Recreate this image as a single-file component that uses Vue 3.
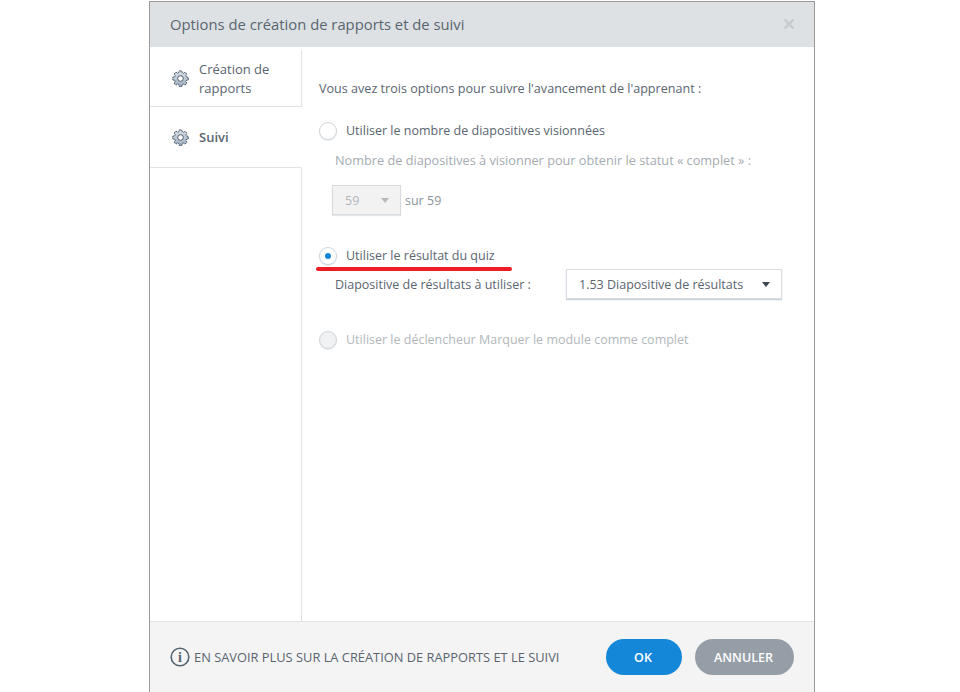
<template>
  <div class="page">
    <div class="dialog">
      <header class="dialog-head">
        <h1>Options de création de rapports et de suivi</h1>
        <svg class="close" width="12" height="12" viewBox="0 0 12 12">
          <path d="M1.5 1.5 10.5 10.5M10.5 1.5 1.5 10.5" stroke="#c6cacd" stroke-width="2.4" fill="none" />
        </svg>
      </header>

      <div class="dialog-body">
        <aside class="sidebar">
          <div v-for="tab in tabs" :key="tab.label" class="tab" :class="{ active: tab.active }">
            <svg class="gear" width="17" height="17" viewBox="0 0 18 18">
              <defs>
                <linearGradient id="gearFill" x1="0" y1="0" x2="0" y2="1">
                  <stop offset="0" stop-color="#dbe2ea" />
                  <stop offset="1" stop-color="#9fb0c4" />
                </linearGradient>
              </defs>
              <path
                d="M7.6 1h2.8l.4 2.1 1.2.5 1.8-1.2 2 2-1.2 1.8.5 1.2 2.1.4v2.8l-2.1.4-.5 1.2 1.2 1.8-2 2-1.8-1.2-1.2.5-.4 2.1H7.6l-.4-2.1-1.2-.5-1.8 1.2-2-2 1.2-1.8-.5-1.2L.8 10.4V7.6l2.1-.4.5-1.2-1.2-1.8 2-2 1.8 1.2 1.2-.5z"
                fill="url(#gearFill)" stroke="#46525f" stroke-width="1" stroke-linejoin="round"
                stroke-dasharray="2.4 .5"
              />
              <circle cx="9" cy="9" r="3" fill="#fff" stroke="#46525f" stroke-width="1" />
            </svg>
            <span>{{ tab.label }}</span>
          </div>
          <div class="sidebar-rest"></div>
        </aside>

        <main class="content">
          <p class="intro">Vous avez trois options pour suivre l'avancement de l'apprenant :</p>

          <label class="radio-row first">
            <span class="radio"></span>
            <span>Utiliser le nombre de diapositives visionnées</span>
          </label>
          <p class="hint">Nombre de diapositives à visionner pour obtenir le statut « complet » :</p>
          <div class="count-row">
            <div class="count-select">
              <span>59</span>
              <i class="caret"></i>
            </div>
            <span class="count-total">sur 59</span>
          </div>

          <label class="radio-row second">
            <span class="radio checked"></span>
            <span>Utiliser le résultat du quiz</span>
            <span class="red-mark"></span>
          </label>
          <div class="result-row">
            <span>Diapositive de résultats à utiliser :</span>
            <div class="result-select">
              <span>1.53 Diapositive de résultats</span>
              <i class="caret dark"></i>
            </div>
          </div>

          <label class="radio-row third">
            <span class="radio disabled"></span>
            <span>Utiliser le déclencheur Marquer le module comme complet</span>
          </label>
        </main>
      </div>

      <footer class="dialog-foot">
        <svg class="info" width="20" height="20" viewBox="0 0 20 20">
          <circle cx="10" cy="10" r="8.8" fill="none" stroke="#56646f" stroke-width="1.6" />
          <text x="10" y="14.6" text-anchor="middle" class="info-i">i</text>
        </svg>
        <span class="more">EN SAVOIR PLUS SUR LA CRÉATION DE RAPPORTS ET LE SUIVI</span>
        <button class="btn ok">OK</button>
        <button class="btn cancel">ANNULER</button>
      </footer>
    </div>
  </div>
</template>

<script setup>
const tabs = [
  { label: 'Création de rapports', active: false },
  { label: 'Suivi', active: true },
]
</script>

<style>
html,
body {
  margin: 0;
  background: #fff;
}
</style>

<style scoped>
.page {
  width: 960px;
  height: 692px;
  overflow: hidden;
  padding-top: 1px;
  box-sizing: border-box;
  font-family: "Open Sans", "Noto Sans", sans-serif;
  font-size: 12.5px;
  color: #5a6570;
}

.dialog {
  width: 666px;
  height: 691px;
  margin-left: 149px;
  box-sizing: border-box;
  border: 1px solid #9a9a9a;
  border-bottom: 0;
  display: flex;
  flex-direction: column;
}

.dialog-head {
  height: 45px;
  flex: none;
  box-sizing: border-box;
  background: #dde1e4;
  display: flex;
  align-items: center;
  justify-content: space-between;
  padding: 0 19px 2px 20px;
}

.dialog-head h1 {
  margin: 0;
  font-size: 14.8px;
  font-weight: 400;
  color: #59656f;
}

.dialog-body {
  flex: 1;
  display: flex;
  min-height: 0;
}

.sidebar {
  width: 152px;
  flex: none;
  display: flex;
  flex-direction: column;
}

.tab {
  height: 60px;
  box-sizing: border-box;
  display: flex;
  align-items: center;
  gap: 10px;
  padding: 0 30px 0 22px;
  border-bottom: 1px solid #dfe3e6;
  border-right: 1px solid #dfe3e6;
  line-height: 19px;
  font-size: 13px;
}

.tab:first-child {
  margin-top: 3px;
  height: 57px;
}

.tab:first-child span {
  margin-top: 1px;
}

.tab.active {
  height: 61px;
  border-right-color: transparent;
  font-weight: 600;
}

.gear {
  flex: none;
}

.sidebar-rest {
  flex: 1;
  border-right: 1px solid #dfe3e6;
}

.content {
  flex: 1;
  padding: 33px 0 0 17px;
}

.content p {
  margin: 0;
}

.intro {
  line-height: 18px;
  font-size: 12.6px;
}

.radio-row {
  display: flex;
  align-items: center;
  gap: 9px;
  position: relative;
  line-height: 18px;
}

.radio-row.first {
  margin-top: 24px;
}

.radio-row.second {
  margin-top: 32px;
}

.radio-row.third {
  margin-top: 32px;
  color: #b2b7bc;
}

.radio {
  width: 16px;
  height: 16px;
  border: 1px solid #cfd5da;
  border-radius: 50%;
  background: #fff;
  box-shadow: 0 1px 1px #e6e9ec;
  display: flex;
  align-items: center;
  justify-content: center;
}

.radio.checked::after {
  content: "";
  width: 6px;
  height: 6px;
  border-radius: 50%;
  background: #1587d9;
}

.radio.disabled {
  background: #eff1f2;
}

.red-mark {
  position: absolute;
  left: -3px;
  top: 20px;
  width: 196px;
  height: 4px;
  border-radius: 2px;
  background: #ee1c25;
}

.hint {
  margin: 11px 0 0 16px !important;
  line-height: 18px;
  font-size: 12.72px;
  color: #a5abb1;
}

.count-row {
  margin: 16px 0 0 13px;
  display: flex;
  align-items: center;
  gap: 4px;
  color: #8c949b;
}

.count-select {
  width: 69px;
  height: 30px;
  box-sizing: border-box;
  border: 1px solid #d7dbde;
  background: #f2f2f2;
  box-shadow: 0 1px 1px #e4e7ea;
  display: flex;
  align-items: center;
  justify-content: space-between;
  padding: 0 11px 0 12px;
  color: #b0b5ba;
}

.caret {
  width: 0;
  height: 0;
  border-left: 4px solid transparent;
  border-right: 4px solid transparent;
  border-top: 5px solid #b5babf;
}

.caret.dark {
  border-top-color: #3c4650;
}

.result-row {
  margin: 4px 0 0 16px;
  display: flex;
  align-items: center;
  justify-content: space-between;
  width: 447px;
  height: 30px;
}

.result-select {
  width: 216px;
  height: 30px;
  box-sizing: border-box;
  border: 1px solid #d7dde3;
  box-shadow: 0 1px 1px #c8d0d8;
  display: flex;
  align-items: center;
  justify-content: space-between;
  padding: 0 11px 0 12px;
}

.dialog-foot {
  height: 71px;
  flex: none;
  box-sizing: border-box;
  background: #f4f4f4;
  border-top: 1px solid #e0e2e4;
  display: flex;
  align-items: center;
  padding: 0 20px;
}

.info {
  flex: none;
}

.info-i {
  font-family: "Liberation Serif", serif;
  font-size: 14px;
  font-weight: 700;
  fill: #56646f;
}

.more {
  margin-left: 4px;
  flex: 1;
  font-size: 12.85px;
}

.btn {
  height: 36px;
  border: 0;
  border-radius: 18px;
  color: #fff;
  font-family: inherit;
  font-size: 12.5px;
  font-weight: 600;
  padding: 0 2px 0 0;
}

.btn.ok {
  width: 76px;
  background: #1587d9;
}

.btn.cancel {
  width: 99px;
  margin-left: 13px;
  background: #959ea6;
}
</style>
